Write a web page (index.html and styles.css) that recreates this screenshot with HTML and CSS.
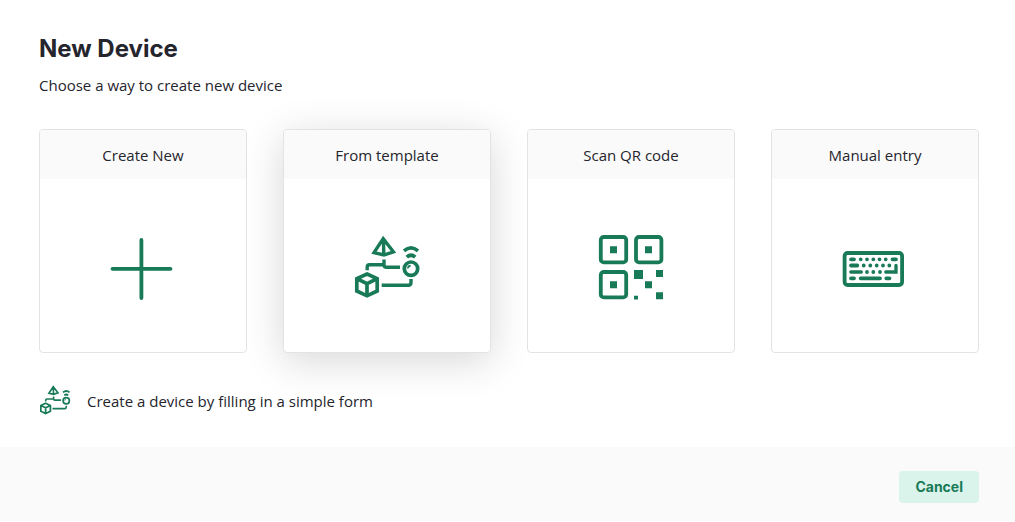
FILE: index.html
```html
<!DOCTYPE html>
<html lang="en">
<head>
<meta charset="utf-8">
<title>New Device</title>
<link rel="stylesheet" href="styles.css">
</head>
<body>
<svg class="sprite" aria-hidden="true">
  <symbol id="template" viewBox="0 0 66 64">
    <g fill="none" stroke="currentColor" stroke-width="3.7">
      <path stroke-width="3.4" d="M29.2 3.6 20 17.6 30 20 39.4 16.8Z M29.4 3 29.8 20"/>
      <path stroke-width="3.4" d="M30 24.5V29.7 M13.2 35.3V32Q13.2 29.7 15.5 29.7H30Q30 32.3 32.6 32.3H46"/>
      <circle cx="57" cy="33.7" r="6.7"/>
      <path stroke-width="1.6" d="M53.8 33.5Q54 30.9 56.6 30.6"/>
      <path d="M50 15.8Q57 9.8 64 15.8 M52.8 22.2Q57 18.4 61.2 22.2"/>
      <path stroke-width="3.4" d="M57 44V47.6Q57 50.3 54.3 50.3H27.7"/>
      <path d="M13 39 23.2 43.6V56L13 60.8 2.8 56V43.6Z M2.8 43.6 13 48.6 23.2 43.6 M13 48.6V61"/>
    </g>
  </symbol>
</svg>
<main class="dialog">
  <div class="content">
    <h1 class="title">New Device</h1>
    <p class="subtitle">Choose a way to create new device</p>
    <div class="cards">
      <button class="card" type="button">
        <span class="card-title">Create New</span>
        <span class="card-body">
          <svg class="icon" viewBox="0 0 72 72" aria-hidden="true">
            <path d="M34.4 8V66 M5.5 36.8H63.5" fill="none" stroke="currentColor" stroke-width="3.8" stroke-linecap="round"/>
          </svg>
        </span>
      </button>
      <button class="card card-active" type="button">
        <span class="card-title">From template</span>
        <span class="card-body">
          <svg class="icon" viewBox="0 0 72 72" aria-hidden="true"><use href="#template" x="3" y="3" width="66" height="64"/></svg>
        </span>
      </button>
      <button class="card" type="button">
        <span class="card-title">Scan QR code</span>
        <span class="card-body">
          <svg class="icon" viewBox="0 0 72 72" aria-hidden="true">
            <g transform="translate(3 3)">
              <g fill="none" stroke="currentColor" stroke-width="3.8">
                <rect x="2.8" y="2" width="25.4" height="25.4" rx="3"/>
                <rect x="38" y="2" width="25.4" height="25.4" rx="3"/>
                <rect x="2.8" y="37" width="25.4" height="25.4" rx="3"/>
              </g>
              <path fill="currentColor" d="M12 11.3h7v7h-7z M47 11.3h7v7h-7z M12 46.3h7v7h-7z M36 35h9v9h-9z M58 35h7v7h-7z M47 46.3h7v7h-7z M58 57.3h7v7h-7z M36 60.7h4v3.7h-4z"/>
            </g>
          </svg>
        </span>
      </button>
      <button class="card" type="button">
        <span class="card-title">Manual entry</span>
        <span class="card-body">
          <svg class="icon" viewBox="0 0 72 72" aria-hidden="true">
            <g transform="translate(3 18)" fill="none" stroke="currentColor" stroke-width="3.8" stroke-linecap="round">
              <rect x="2.6" y="3" width="57.5" height="32" rx="3"/>
              <path d="M9 9.3H12 M18.7 9.3h.01 M25 9.3h.01 M31.3 9.3h.01 M37.5 9.3h.01 M43.7 9.3h.01 M50.5 9.3H54 M9 15.5H15.3 M21.7 15.5h.01 M28.3 15.5h.01 M34.7 15.5h.01 M41 15.5h.01 M47.3 15.5h.01 M25 22h.01 M31.3 22h.01 M38 22h.01 M9 28.3H12 M18.7 28.3H38 M44.3 28.3H47.5"/>
              <path stroke-width="3.3" d="M8.8 22H19.3 M43.8 22H54V15.5"/>
            </g>
          </svg>
        </span>
      </button>
    </div>
    <div class="hint">
      <svg class="hint-icon" viewBox="0 0 66 64" aria-hidden="true"><use href="#template"/></svg>
      <span>Create a device by filling in a simple form</span>
    </div>
  </div>
  <footer class="footer">
    <button class="cancel" type="button">Cancel</button>
  </footer>
</main>
</body>
</html>
```
FILE: styles.css
```css
* { box-sizing: border-box; }

body {
  margin: 0;
  background: #fff;
  color: #25252d;
  font: 15px/24px "Open Sans", "Noto Sans", sans-serif;
}

.sprite {
  display: none;
}

.content {
  padding: 33px 36px 30px 39px;
}

.title {
  margin: 0;
  font: 700 24px/32px Inter, "Liberation Sans", sans-serif;
}

.subtitle {
  margin: 8px 0 32px;
}

.cards {
  display: grid;
  grid-template-columns: repeat(4, 1fr);
  gap: 36px;
}

.card {
  display: flex;
  flex-direction: column;
  padding: 0;
  overflow: hidden;
  border: 1px solid #e3e3e4;
  border-radius: 4px;
  background: #fff;
  color: inherit;
  font: inherit;
  cursor: pointer;
}

.card-active {
  box-shadow: 0 8px 40px rgba(0, 0, 0, 0.16);
}

.card-title {
  width: 100%;
  padding: 13px 8px 12px;
  background: #fafafa;
}

.card-body {
  display: flex;
  justify-content: center;
  width: 100%;
  padding: 53px 0 48px;
  color: #187a57;
}

.icon {
  width: 72px;
  height: 72px;
}

.hint {
  display: flex;
  align-items: flex-start;
  gap: 16px;
  margin-top: 32px;
  line-height: 32px;
}

.hint-icon {
  width: 32px;
  height: 30px;
  color: #187a57;
}

.footer {
  display: flex;
  justify-content: flex-end;
  padding: 24px 36px 18px;
  background: #fafafa;
}

.cancel {
  padding: 4px 16px;
  border: 0;
  border-radius: 4px;
  background: #dbf4eb;
  color: #187a57;
  font: 700 14px/24px Inter, "Liberation Sans", sans-serif;
  cursor: pointer;
}
```
